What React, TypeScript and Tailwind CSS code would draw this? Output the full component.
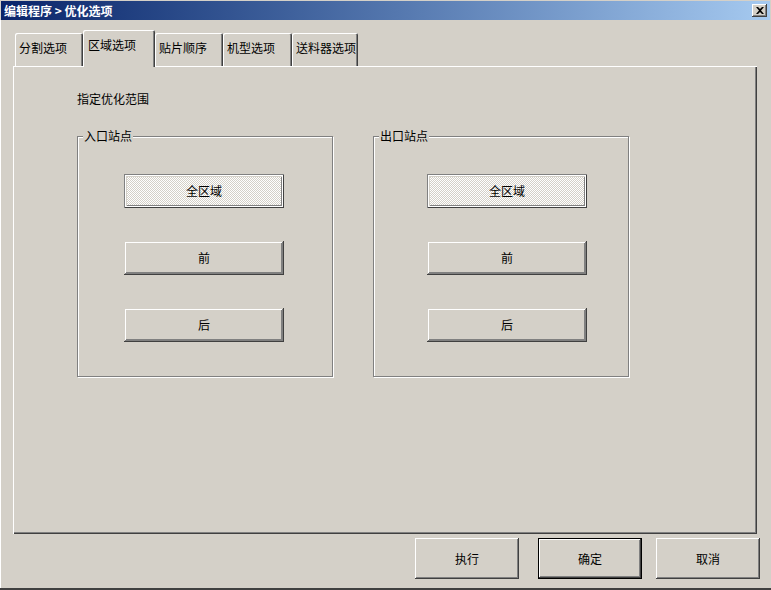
import React from 'react';

const font = "font-['SimSun','Noto_Sans_CJK_SC',sans-serif]";

const bevel =
    'shadow-[inset_-1px_-1px_#404040,inset_1px_1px_#ffffff,inset_-2px_-2px_#808080,inset_2px_2px_#d4d0c8]';

const GroupButton = ({ label, checked }: { label: string; checked?: boolean }) => (
    <div
        className={`w-[160px] h-[34px] flex items-center justify-center text-[12px] text-black ${
            checked
                ? 'bg-[repeating-conic-gradient(#ffffff_0_25%,#d4d0c8_0_50%)] bg-[length:2px_2px] shadow-[inset_1px_1px_#808080,inset_-1px_-1px_#404040,inset_2px_2px_#ffffff,inset_-2px_-2px_#ffffff,inset_3px_3px_#d4d0c8,inset_-3px_-3px_#808080]'
                : `bg-[#d4d0c8] shadow-[inset_-1px_-1px_#404040,inset_1px_1px_#d4d0c8,inset_-2px_-2px_#808080,inset_2px_2px_#ffffff,inset_-3px_-3px_#808080]`
        }`}
    >
        {label}
    </div>
);

const GroupBox = ({ title, pad }: { title: string; pad: string }) => (
    <div className="relative w-[256px] h-[241px] border border-[#808080] shadow-[inset_1px_1px_#ffffff,1px_1px_#ffffff]">
        <span className="absolute -top-[8px] left-[5px] bg-[#d4d0c8] px-[1px] text-[12px] leading-[14px]">{title}</span>
        <div className={`flex flex-col gap-[33px] pt-[37px] ${pad}`}>
            <GroupButton label="全区域" checked />
            <GroupButton label="前" />
            <GroupButton label="后" />
        </div>
    </div>
);

const tabs = [
    { label: '分割选项', w: 'w-[68px]' },
    { label: '区域选项', w: 'w-[72px]', active: true },
    { label: '贴片顺序', w: 'w-[68px]' },
    { label: '机型选项', w: 'w-[69px]' },
    { label: '送料器选项', w: 'w-[66px]' },
];

const App = () => {
    return (
        <div className={`w-[771px] h-[590px] bg-[#d4d0c8] flex flex-col text-black ${font} border-b-2 border-b-[#404040] overflow-hidden`}>
            {/* title bar */}
            <div className="h-[19px] mt-[1px] mx-[1px] bg-gradient-to-r from-[#0a246a] to-[#a6caf0] flex items-center justify-between pl-[3px] pr-[3px]">
                <span className="text-white font-bold text-[12px] leading-none">编辑程序 &gt; 优化选项</span>
                <div className={`w-[15px] h-[13px] bg-[#d4d0c8] flex items-center justify-center ${bevel}`}>
                    <svg width="8" height="7" viewBox="0 0 8 7">
                        <path d="M0 0h2l2 2 2-2h2L5 3.5 8 7H6L4 5 2 7H0l3-3.5z" fill="#000" />
                    </svg>
                </div>
            </div>

            <div className="flex-1 flex flex-col border-l border-l-white">
                {/* tabs */}
                <div className="flex items-end h-[46px] pl-[14px]">
                    {tabs.map(t => (
                        <div
                            key={t.label}
                            className={`${t.w} flex bg-[#d4d0c8] text-[12px] rounded-t-[2px] ${
                                t.active
                                    ? 'h-[37px] -mb-[1px] z-10 relative pl-[5px] pt-[6px] shadow-[inset_1px_1px_#ffffff,inset_-1px_0_#404040,inset_-2px_0_#808080]'
                                    : 'h-[33px] pl-[4px] pt-[6px] shadow-[inset_1px_1px_#ffffff,inset_-1px_0_#404040,inset_-2px_0_#808080]'
                            }`}
                        >
                            {t.label}
                        </div>
                    ))}
                </div>

                {/* tab panel */}
                <div className="ml-[12px] w-[744px] h-[468px] bg-[#d4d0c8] shadow-[inset_1px_1px_#ffffff,inset_-1px_-1px_#404040,inset_-2px_-2px_#808080] pl-[64px] pt-[26px]">
                    <div className="text-[12px] leading-[14px]">指定优化范围</div>
                    <div className="flex gap-[40px] mt-[30px]">
                        <GroupBox title="入口站点" pad="pl-[46px]" />
                        <GroupBox title="出口站点" pad="pl-[53px]" />
                    </div>
                </div>

                {/* bottom buttons */}
                <div className="flex pl-[414px] pt-[4px] gap-[19px] text-[12px]">
                    <div className={`w-[104px] h-[41px] flex items-center justify-center ${bevel}`}>执行</div>
                    <div className="w-[104px] h-[41px] flex items-center justify-center border border-black shadow-[inset_-1px_-1px_#404040,inset_1px_1px_#ffffff,inset_-2px_-2px_#808080]">确定</div>
                    <div className={`w-[104px] h-[41px] -ml-[5px] flex items-center justify-center ${bevel}`}>取消</div>
                </div>
            </div>
        </div>
    );
};

export default App;
